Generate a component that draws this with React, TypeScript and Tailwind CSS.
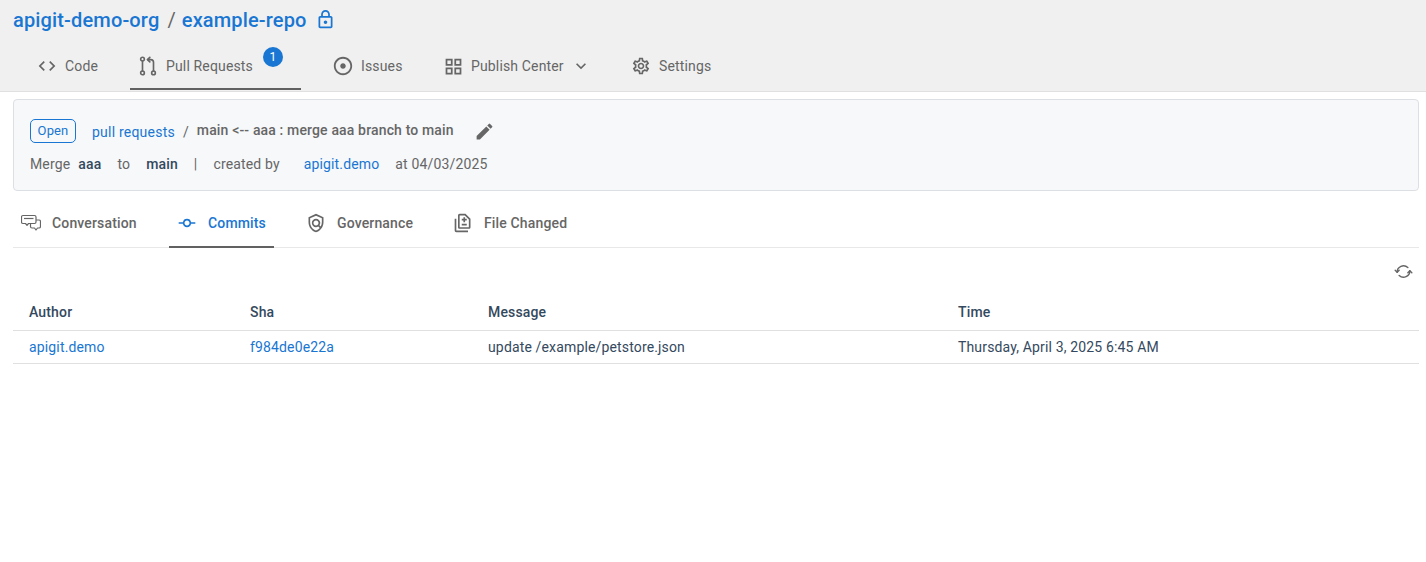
import { ReactNode } from "react";
import {
  MdAdjust,
  MdCode,
  MdEdit,
  MdExpandMore,
  MdOutlineCommit,
  MdOutlineDifference,
  MdOutlineGridView,
  MdOutlineLock,
  MdOutlinePolicy,
  MdOutlineSettings,
} from "react-icons/md";

const ROW = [
  { w: "w-[221px]", head: "Author", cell: "apigit.demo", link: true },
  { w: "w-[238px]", head: "Sha", cell: "f984de0e22a", link: true },
  { w: "w-[470px]", head: "Message", cell: "update /example/petstore.json", link: false },
  { w: "flex-1", head: "Time", cell: "Thursday, April 3, 2025 6:45 AM", link: false },
];

function PullRequestIcon() {
  return (
    <svg width="22" height="22" viewBox="0 0 24 24" fill="none" stroke="currentColor" strokeWidth="1.8" strokeLinecap="round" strokeLinejoin="round">
      <circle cx="6" cy="4.5" r="2" />
      <circle cx="6" cy="19.5" r="2" />
      <circle cx="18" cy="19.5" r="2" />
      <path d="M6 6.5v11" />
      <path d="M18 17.5V8a3 3 0 0 0-3-3h-3.5" />
      <path d="M14 2.5 11.5 5l2.5 2.5" />
    </svg>
  );
}

function ConversationIcon() {
  return (
    <svg width="20" height="20" viewBox="0 0 20 20" fill="none" stroke="currentColor" strokeWidth="1.2" strokeLinejoin="round">
      <path d="M2 2.5h11.5a1.5 1.5 0 0 1 1.5 1.5v5a1.5 1.5 0 0 1-1.5 1.5H7.5l-1.5 1.8-1.5-1.8H2A1.5 1.5 0 0 1 .5 9V4A1.5 1.5 0 0 1 2 2.5z" />
      <path d="M3 5.5h9.5" />
      <path d="M15 7h3a1.5 1.5 0 0 1 1.5 1.5v5a1.5 1.5 0 0 1-1.5 1.5h-1.5l-1.5 2-1.5-2H11a1.5 1.5 0 0 1-1.5-1.5v-3" />
    </svg>
  );
}

function RefreshIcon() {
  return (
    <svg width="19" height="19" viewBox="0 0 24 24" fill="none" stroke="currentColor" strokeWidth="1.8" strokeLinecap="round" strokeLinejoin="round">
      <path d="M4 13a8 8 0 0 1 13.5-6" />
      <path d="M1.5 10.5 4 13l2.5-2.5" />
      <path d="M20 11a8 8 0 0 1-13.5 6" />
      <path d="M17.5 13.5 20 11l2.5 2.5" />
    </svg>
  );
}

function RepoTab({ icon, label, className, children }: { icon: ReactNode; label: string; className: string; children?: ReactNode }) {
  return (
    <div className={`flex h-[46px] items-center border-b-2 text-[14px] tracking-[0.15px] text-[#666666] ${className}`}>
      <span className="flex w-[18px] justify-center text-[#666666] [&>svg]:shrink-0">{icon}</span>
      <span className="ml-[9px]">{label}</span>
      {children}
    </div>
  );
}

function SubTab({ icon, label, className }: { icon: ReactNode; label: string; className: string }) {
  return (
    <div className={`flex h-[48px] items-center border-b-2 text-[14px] font-medium tracking-[0.15px] ${className}`}>
      <span className="flex w-[20px] justify-center [&>svg]:shrink-0">{icon}</span>
      <span className="ml-[11px]">{label}</span>
    </div>
  );
}

export default function App() {
  return (
    <div className="min-h-[562px] bg-white font-['Roboto',sans-serif]">
      <header className="h-[92px] border-b border-[#e0e0e0] bg-[#f0f0f0] pl-[13px]">
        <div className="flex h-[44px] items-start pt-[6px] text-[20px] leading-[28px] tracking-[0.15px]">
          <span className="font-medium text-[#1976d2]">apigit-demo-org</span>
          <span className="ml-[8px] mr-[6px] text-[#666666]">/</span>
          <span className="font-medium text-[#1976d2]">example-repo</span>
          <MdOutlineLock className="ml-[8px] mt-[3px] text-[#1976d2]" size={21} />
        </div>
        <nav className="flex">
          <RepoTab icon={<MdCode size={20} />} label="Code" className="ml-[25px] w-[92px] border-transparent" />
          <RepoTab
            icon={<PullRequestIcon />}
            label="Pull Requests"
            className="relative w-[171px] border-[#616161] pl-[9px]"
          >
            <span className="absolute left-[133px] top-[3px] flex h-[20px] w-[20px] items-center justify-center rounded-full bg-[#1976d2] text-[12px] text-white">
              1
            </span>
          </RepoTab>
          <RepoTab icon={<MdAdjust size={22} />} label="Issues" className="ml-[33px] w-[110px] border-transparent" />
          <RepoTab icon={<MdOutlineGridView size={21} />} label="Publish Center" className="w-[188px] border-transparent">
            <MdExpandMore className="ml-[7px]" size={20} />
          </RepoTab>
          <RepoTab icon={<MdOutlineSettings size={20} />} label="Settings" className="border-transparent" />
        </nav>
      </header>

      <main className="pl-[13px] pr-[7px]">
        <section className="mt-[7px] h-[92px] rounded-[4px] border border-[#dcdfe3] bg-[#f6f8fa] pl-[16px] pt-[19px] tracking-[0.15px]">
          <div className="flex h-[24px] items-center">
            <span className="flex h-[24px] w-[46px] items-center justify-center rounded-[5px] border border-[#1976d2] text-[13px] text-[#1976d2]">
              Open
            </span>
            <span className="ml-[16px] mt-[2px] text-[14px] tracking-[0.22px] text-[#1976d2]">pull requests</span>
            <span className="ml-[8px] mt-[2px] text-[14px] text-[#666666]">/</span>
            <span className="mb-[1px] ml-[8px] text-[14px] font-medium text-[#666666]">main &lt;-- aaa : merge aaa branch to main</span>
            <MdEdit className="ml-[20px] text-[#666666]" size={21} />
          </div>
          <div className="mt-[11px] flex h-[20px] items-center text-[14px] text-[#666666]">
            <span>Merge</span>
            <span className="ml-[8px] font-medium text-[#34495e]">aaa</span>
            <span className="ml-[16px]">to</span>
            <span className="ml-[16px] font-medium text-[#34495e]">main</span>
            <span className="ml-[16px]">|</span>
            <span className="ml-[16px]">created by</span>
            <span className="ml-[24px] text-[#1976d2]">apigit.demo</span>
            <span className="ml-[16px]">at 04/03/2025</span>
          </div>
        </section>

        <nav className="mt-[9px] flex h-[48px] border-b border-[#e8e8e8]">
          <SubTab icon={<ConversationIcon />} label="Conversation" className="ml-[8px] w-[148px] border-transparent text-[#666666]" />
          <SubTab
            icon={<MdOutlineCommit size={20} />}
            label="Commits"
            className="w-[105px] border-[#616161] pl-[8px] text-[#1976d2]"
          />
          <SubTab icon={<MdOutlinePolicy size={20} />} label="Governance" className="ml-[32px] w-[147px] border-transparent text-[#666666]" />
          <SubTab icon={<MdOutlineDifference size={20} />} label="File Changed" className="border-transparent text-[#666666]" />
        </nav>

        <div className="flex h-[47px] justify-end pr-[6px] pt-[14px] text-[#666666]">
          <RefreshIcon />
        </div>

        <div className="flex h-[36px] border-b border-[#e0e0e0] text-[14px] font-medium tracking-[0.15px] text-[#34495e]">
          {ROW.map((c) => (
            <div key={c.head} className={`${c.w} flex items-center pl-[16px]`}>
              {c.head}
            </div>
          ))}
        </div>
        <div className="flex h-[33px] border-b border-[#e0e0e0] text-[14px] tracking-[0.15px]">
          {ROW.map((c) => (
            <div key={c.head} className={`${c.w} flex items-center pl-[16px] ${c.link ? "text-[#1976d2]" : "text-[#34495e]"}`}>
              {c.cell}
            </div>
          ))}
        </div>
      </main>
    </div>
  );
}
